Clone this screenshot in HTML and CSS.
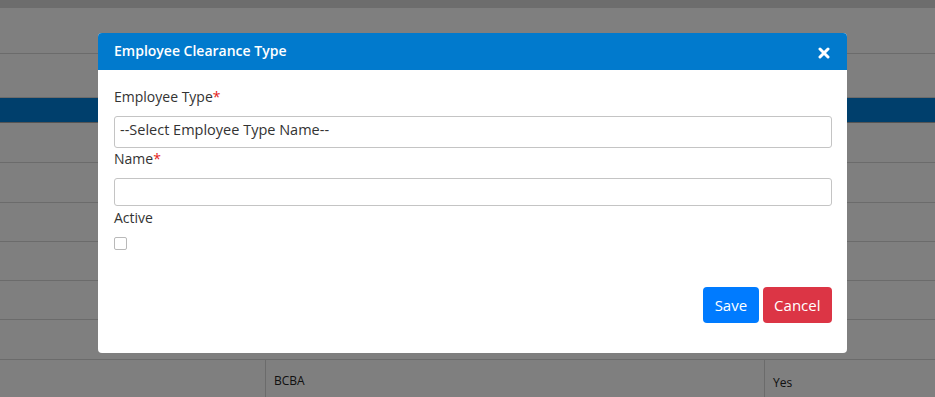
FILE: index.html
```html
<!DOCTYPE html>
<html lang="en">

<head>
    <meta charset="UTF-8">
    <meta name="viewport" content="width=device-width, initial-scale=1.0">
    <title>Employee Clearance Type</title>
    <link rel="stylesheet" href="styles.css">
</head>

<body>
    <div class="topbar"></div>
    <div class="grid">
        <div class="row tall"></div>
        <div class="row tall2"></div>
        <div class="row head"></div>
        <div class="row"></div>
        <div class="row"></div>
        <div class="row short"></div>
        <div class="row short"></div>
        <div class="row short"></div>
        <div class="row"></div>
        <div class="row cells">
            <div class="cell c1"></div>
            <div class="cell c2">BCBA</div>
            <div class="cell c3">Yes</div>
        </div>
    </div>

    <div class="backdrop"></div>

    <div class="modal">
        <div class="modal-header">
            <span class="modal-title">Employee Clearance Type</span>
            <svg class="close" width="12" height="12" viewBox="0 0 12 12">
                <path d="M2 2 L10 10 M10 2 L2 10" stroke="#fff" stroke-width="3" stroke-linecap="round" />
            </svg>
        </div>
        <div class="modal-body">
            <label class="lbl">Employee Type<span class="req">*</span></label>
            <div class="select">--Select Employee Type Name--</div>
            <label class="lbl">Name<span class="req">*</span></label>
            <div class="input"></div>
            <label class="lbl">Active</label>
            <div class="check"></div>
        </div>
        <div class="modal-footer">
            <button class="btn save">Save</button>
            <button class="btn cancel">Cancel</button>
        </div>
    </div>
</body>

</html>
```

FILE: styles.css
```css
body {
    margin: 0;
    background: #fefefe;
    font-family: "Open Sans", "Liberation Sans", sans-serif;
    overflow: hidden;
    height: 397px;
}

.topbar {
    height: 8px;
    background: #dadada;
}

.row {
    height: 39px;
    border-bottom: 1px solid #d6d6d6;
}

.row.short {
    height: 38px;
}

.row.tall {
    height: 45px;
}

.row.tall2 {
    height: 43px;
}

.row.head {
    height: 24px;
    background: #007ed9;
    border-bottom: 1px solid #a8a8a8;
}

.row.cells {
    display: flex;
    height: 40px;
    border-bottom: 0;
}

.cell {
    border-right: 1px solid #d6d6d6;
    font-size: 12px;
    color: #222;
    padding: 12px 0 0 8px;
}

.c1 {
    width: 257px;
}

.c2 {
    width: 490px;
}

.c3 {
    border-right: 0;
    padding-top: 14px;
}

.backdrop {
    position: fixed;
    top: 0;
    left: 0;
    right: 0;
    bottom: 0;
    background: rgba(0, 0, 0, 0.5);
}

.modal {
    position: fixed;
    top: 33px;
    left: 98px;
    width: 749px;
    height: 320px;
    background: #fff;
    border-radius: 4px;
    overflow: hidden;
}

.modal-header {
    height: 37px;
    background: #017acd;
    display: flex;
    align-items: center;
    justify-content: space-between;
    padding: 0 17px 0 16px;
    color: #fff;
}

.modal-title {
    font-size: 14px;
    font-weight: 600;
    margin-top: -3px;
}

.close {
    margin-top: 2px;
}

.modal-body {
    padding: 16px 15px 0 16px;
    display: flex;
    flex-direction: column;
}

.lbl {
    font-size: 14px;
    line-height: 21px;
    color: #333;
}

.req {
    color: #e41b1b;
}

.select {
    margin: 9px 0 0;
    height: 30px;
    border: 1px solid #c4c4c4;
    border-radius: 3px;
    font-size: 14.5px;
    line-height: 26px;
    padding-left: 5px;
    color: #333;
}

.input {
    margin: 9px 0 1px;
    height: 26px;
    border: 1px solid #c4c4c4;
    border-radius: 3px;
}

.check {
    margin-top: 9px;
    width: 11px;
    height: 11px;
    border: 1px solid #b9b9b9;
    border-radius: 2px;
}

.modal-footer {
    display: flex;
    justify-content: flex-end;
    gap: 4px;
    padding: 37px 15px 0 0;
}

.btn {
    height: 36px;
    border: 0;
    border-radius: 4px;
    color: #fff;
    font-family: "Open Sans", "Liberation Sans", sans-serif;
    font-size: 15px;
    padding: 0 11.5px;
}

.save {
    background: #007bff;
}

.cancel {
    background: #dc3545;
}
```
